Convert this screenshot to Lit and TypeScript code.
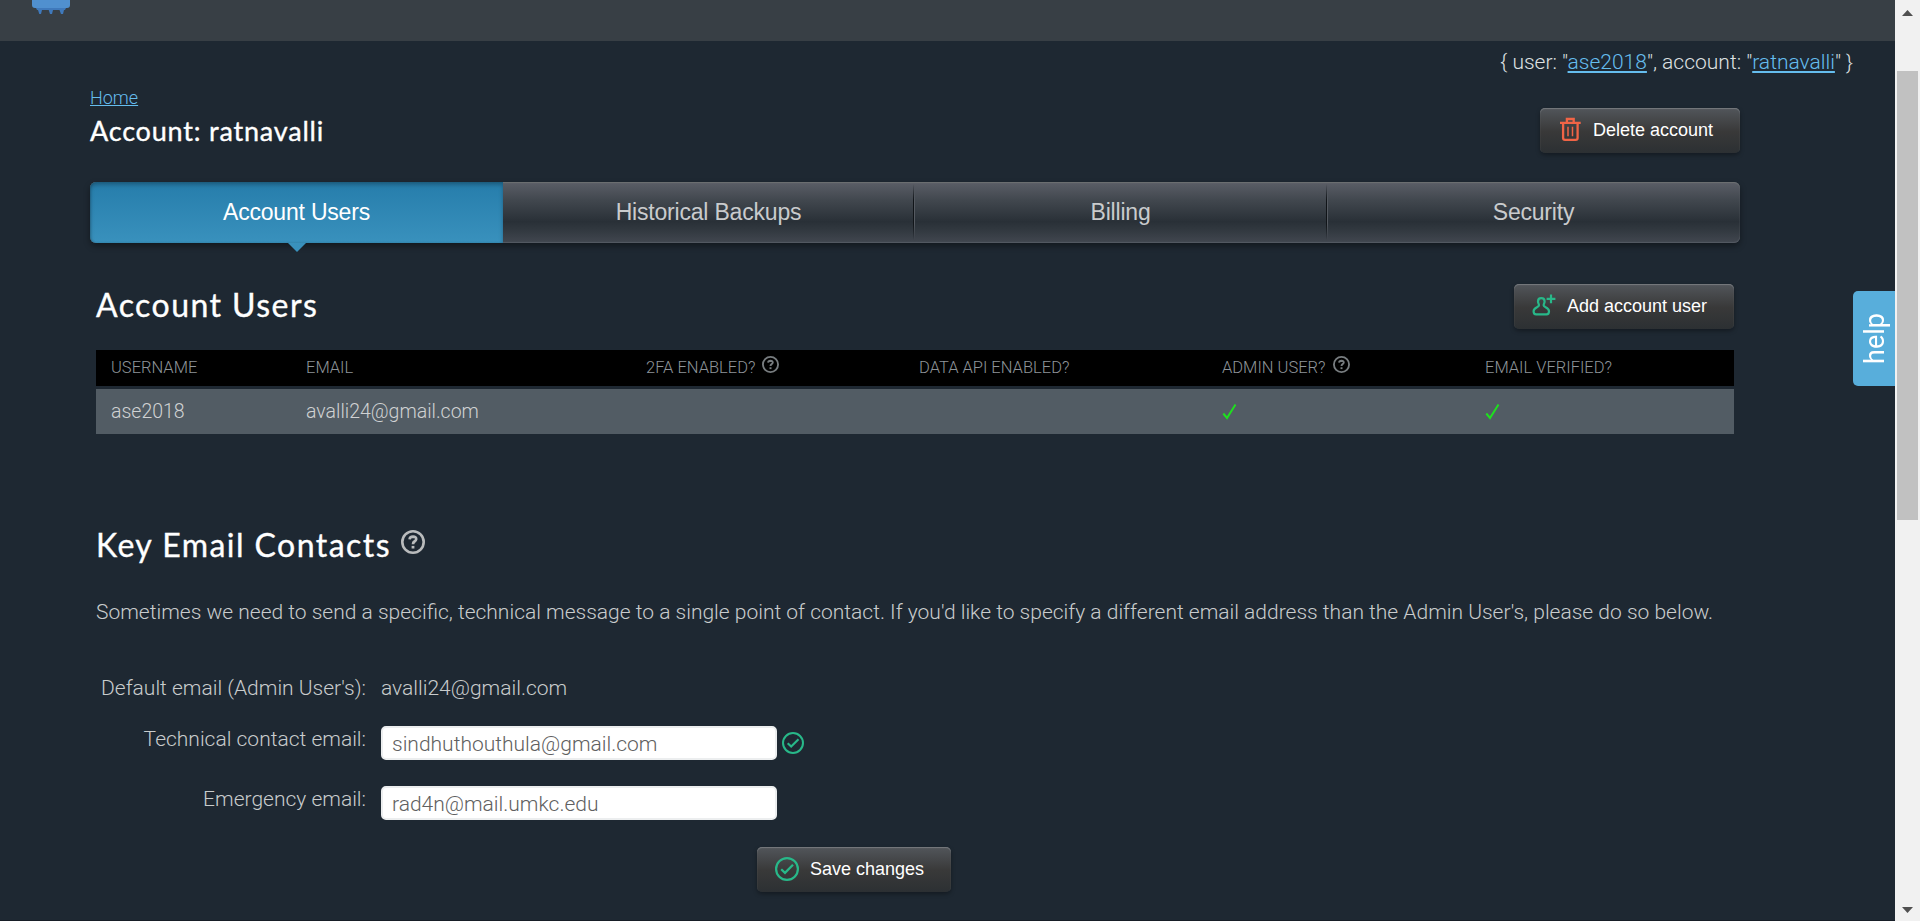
import { LitElement, html, css, svg } from "lit";
import { customElement, property } from "lit/decorators.js";

const icons: Record<string, unknown> = {
  trash: svg`<path d="M0 4.9H20.7M6.9 4V1H13.7V4" stroke-width="2.3"/><path d="M3.1 5.5V20Q3.1 21.9 5 21.9H15.7Q17.6 21.9 17.6 20V5.5" stroke-width="2.3"/><path d="M8 8.7V18.2M12.5 8.7V18.2" stroke-width="1.5"/>`,
  user: svg`<path d="M9.3 4.1C11.6 4.1 12.6 5.5 12.6 7.4C12.6 9.2 11.6 9.9 11.6 11.3C11.6 13.3 17 13.2 17 17.2C17 19.5 16.2 20.3 14.5 20.3H4.1C2.4 20.3 1.6 19.5 1.6 17.2C1.6 13.2 7 13.3 7 11.3C7 9.9 6 9.2 6 7.4C6 5.5 7 4.1 9.3 4.1Z" stroke-width="2.2"/><path d="M19 0.6V9.2M14.6 4.9H23.4" stroke-width="2.2"/>`,
  check: svg`<circle cx="12" cy="12" r="10.9" stroke-width="2.2"/><path d="M6.2 12.2L10 15.9L18 7.8" stroke-width="2.3"/>`,
  help: svg`<circle cx="12" cy="12" r="10.7" stroke-width="2.6"/><path d="M8.6 9.3Q8.8 6.6 12 6.6Q15.3 6.7 15.2 9.2Q15.1 10.5 13.5 11.5Q12 12.4 12 14.2" stroke-width="2.7"/><path d="M12 15.9V18.5" stroke-width="2.8"/>`,
};

@customElement("line-icon")
class LineIcon extends LitElement {
  @property() name = "";
  static styles = css`
    :host { display: block; flex: none; width: 24px; height: 24px; }
    .icon { display: block; width: 100%; height: 100%; fill: none; stroke: currentColor; overflow: visible; }
  `;
  render() {
    return html`<svg class="icon" viewBox="0 0 24 24">${icons[this.name]}</svg>`;
  }
}

@customElement("app-root")
class AppRoot extends LitElement {
  static styles = css`
    :host { display: block; height: 921px; overflow: hidden; }
    * { box-sizing: border-box; }
    .shell { display: flex; height: 921px; overflow: hidden; background: #1e2832;
      font: 300 21px/30px Roboto, sans-serif; color: #c9cccd; }
    .page { position: relative; width: 1895px; height: 921px; border-bottom: 1px solid #171e27; }
    .top { height: 41px; background: #383f45; padding-left: 32px; }
    .logo { display: block; width: 38px; height: 14px; }
    .who { text-align: right; padding: 6px 42px 0 0; height: 43px; color: #dfe1e2; }
    a { color: #65bdee; text-decoration: underline; text-decoration-thickness: 2px; text-underline-offset: 2px; }
    .home { display: block; font-size: 18px; line-height: 28px; text-decoration-thickness: 1px; text-underline-offset: 1px; }
    .content { width: 1650px; margin-left: 90px; }
    .title-row { display: flex; justify-content: space-between; height: 98px; }
    h1, h2, p { margin: 0; }
    h1, h2 { font-family: Lato, sans-serif; font-weight: 400; color: #fff; -webkit-text-stroke: .35px #fff; }
    h1 { font-size: 27px; line-height: 38px; letter-spacing: .8px; }
    h2 { font-size: 32px; line-height: 41px; letter-spacing: 1.45px; }
    .btn { display: flex; align-items: center; height: 45px; border: 0; border-radius: 5px; padding: 0 0 1px;
      font: 400 18px/20px "Liberation Sans", sans-serif; color: #fff;
      background: linear-gradient(#52565b, #393939 52%, #2c3033);
      box-shadow: inset 0 1px 1px #777a7e, 0 2px 4px rgba(0,0,0,.35); }
    .delete { width: 200px; margin-top: 24px; padding-left: 20px; gap: 9px; }
    .add { width: 220px; padding-left: 18px; gap: 11px; }
    .save { width: 194px; margin: 1px 0 0 661px; padding-left: 18px; gap: 11px; }
    .red { color: #f16446; }
    .green { color: #28b889; }
    .tabs { display: grid; grid-template-columns: 413px 411px 413px 413px; height: 61px; border-radius: 6px;
      background: linear-gradient(#5b5e67, #41474e 30%, #293037 65%, #31383f 78%, #424750);
      box-shadow: inset 0 1px 1px #6d7072, inset 0 -1px 1px #555a63, 0 3px 6px rgba(0,0,0,.4); }
    .tab { position: relative; display: flex; align-items: center; justify-content: center; height: 61px;
      font: 400 23px/30px "Liberation Sans", sans-serif; letter-spacing: -.2px; color: #c9cbcd; padding-bottom: 1px; }
    .tab.divided::after { content: ""; position: absolute; right: -1px; top: 2px; width: 2px; height: 56px;
      background: linear-gradient(90deg, #101418 50%, #555a61 50%);
      mask-image: linear-gradient(transparent, #000 30%, #000 70%, transparent); }
    .tab.active { background: linear-gradient(#267dab, #3991bd); color: #fff; border-radius: 6px 0 0 6px;
      box-shadow: inset 0 3px 4px rgba(0,0,0,.25), inset 1px 0 2px rgba(0,0,0,.15); }
    .tab.active::after { content: ""; position: absolute; left: calc(50% - 9px); top: 61px;
      border: 9px solid transparent; border-top-color: #3991bd; border-bottom: 0; }
    .panel { padding: 0 6px; }
    .section-head { display: flex; justify-content: space-between; margin-top: 41px; height: 66px; }
    .grid { display: grid; grid-template-columns: 195px 340px 273px 303px 263px 1fr; padding-left: 15px; }
    .thead { height: 36px; background: #000; color: #8e9499; font-size: 16.5px; line-height: 36px; }
    .cell { display: flex; gap: 7px; }
    .cell line-icon { width: 17px; height: 17px; margin-top: 6px; color: #777c7f; }
    .row { margin-top: 3px; height: 45px; font-size: 19.5px; line-height: 46px; background: #525c64; color: #d0d2d3; }
    .tick { display: block; width: 15px; height: 17px; margin-top: 14px; fill: none; stroke: #1ee01e; stroke-width: 2; }
    .key { display: flex; gap: 10px; margin-top: 90px; height: 40px; }
    .key line-icon { color: #b9bbbc; margin-top: 6px; }
    .note { margin-top: 33px; line-height: 30px; white-space: nowrap; }
    .form { display: grid; grid-template-columns: 270px 1fr; column-gap: 15px; margin-top: 46px; }
    .label { text-align: right; white-space: nowrap; height: 53px; }
    .tech, .emer { height: 60px; }
    .contact { height: 60px; line-height: 26px; }
    .tech { display: flex; gap: 5px; }
    .tech line-icon { width: 22px; height: 22px; margin-top: 6px; }
    input { width: 396px; height: 34px; border: 2px solid #eceeef; border-radius: 5px; outline: 0; padding: 2px 9px 0;
      background: #fff; color: #606060; font: 300 21px/28px Roboto, sans-serif; }
    .emer input { display: block; }
    .help { position: absolute; right: 0; top: 291px; width: 42px; height: 95px; border-radius: 5px 0 0 5px;
      background: #58aedb; color: #fff; display: flex; align-items: center; justify-content: center; padding-left: 2px; }
    .help-text { writing-mode: vertical-rl; transform: rotate(180deg); font-size: 27px; font-weight: 400; line-height: 40px; }
    .scroll { display: flex; flex-direction: column; justify-content: space-between; align-items: center;
      width: 25px; height: 921px; padding: 10px 0 8px; background: #f1f1f1; }
    .arrow { width: 11px; height: 6px; fill: #505050; display: block; }
    .thumb { width: 21px; height: 449px; background: #c1c1c1; margin: 55px 0 auto; }
  `;

  render() {
    return html`<div class="shell">
      <main class="page">
        <header class="top">
          <svg class="logo" viewBox="0 0 38 14">
            <path d="M3 6H35L33 10H32L31 14H29L27.5 10H21L20 14H18L16.7 10H10L9 14H7.3L6 10H5Z" fill="#3f79bb"/>
            <path d="M0 0H38V5Q38 8 35 8H3Q0 8 0 5Z" fill="#5090cf"/>
          </svg>
        </header>
        <div class="who">{ user: "<a>ase2018</a>", account: "<a>ratnavalli</a>" }</div>
        <div class="content">
          <div class="title-row">
            <div><a class="home">Home</a><h1>Account: ratnavalli</h1></div>
            <button class="btn delete"><line-icon class="red" name="trash"></line-icon>Delete account</button>
          </div>
          <nav class="tabs">
            <div class="tab active">Account Users</div>
            <div class="tab divided">Historical Backups</div>
            <div class="tab divided">Billing</div>
            <div class="tab">Security</div>
          </nav>
          <section class="panel">
            <div class="section-head">
              <h2>Account Users</h2>
              <button class="btn add"><line-icon class="green" name="user"></line-icon>Add account user</button>
            </div>
            <div class="grid thead">
              <div class="cell">USERNAME</div><div class="cell">EMAIL</div>
              <div class="cell">2FA ENABLED?<line-icon name="help"></line-icon></div>
              <div class="cell">DATA API ENABLED?</div>
              <div class="cell">ADMIN USER?<line-icon name="help"></line-icon></div>
              <div class="cell">EMAIL VERIFIED?</div>
            </div>
            <div class="grid row">
              <div>ase2018</div><div>avalli24@gmail.com</div><div></div><div></div>
              ${[0, 1].map(() => html`<div><svg class="tick" viewBox="0 0 15 17"><path d="M1.3 10.5L5 15L13.5 1.5"/></svg></div>`)}
            </div>
            <div class="key"><h2>Key Email Contacts</h2><line-icon name="help"></line-icon></div>
            <p class="note">Sometimes we need to send a specific, technical message to a single point of contact. If you'd like to specify a different email address than the Admin User's, please do so below.</p>
            <div class="form">
              <div class="label">Default email (Admin User's):</div><div>avalli24@gmail.com</div>
              <div class="label contact">Technical contact email:</div>
              <div class="tech"><input .value=${"sindhuthouthula@gmail.com"}><line-icon class="green" name="check"></line-icon></div>
              <div class="label contact">Emergency email:</div>
              <div class="emer"><input .value=${"rad4n@mail.umkc.edu"}></div>
            </div>
            <button class="btn save"><line-icon class="green" name="check"></line-icon>Save changes</button>
          </section>
        </div>
        <div class="help"><span class="help-text">help</span></div>
      </main>
      <aside class="scroll">
        <svg class="arrow" viewBox="0 0 11 6"><path d="M0 6L5.5 0L11 6Z"/></svg>
        <div class="thumb"></div>
        <svg class="arrow" viewBox="0 0 11 6"><path d="M0 0L5.5 6L11 0Z"/></svg>
      </aside>
    </div>`;
  }
}
